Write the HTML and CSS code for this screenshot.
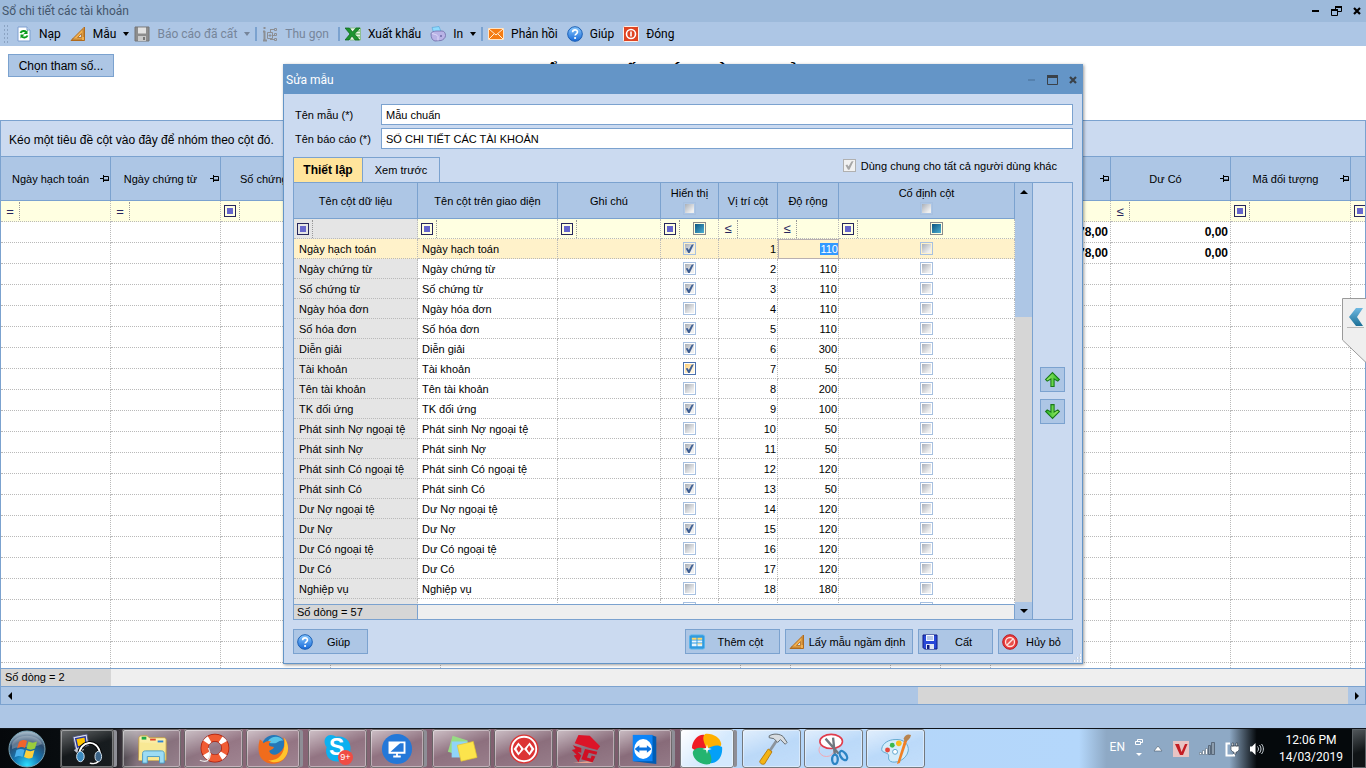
FILE: index.html
```
<!DOCTYPE html>
<html lang="vi">
<head>
    <meta charset="UTF-8">
    <meta name="viewport" content="width=device-width, initial-scale=1.0">
    <title>Sổ chi tiết các tài khoản</title>
    <link rel="stylesheet" href="styles.css">
</head>
<body>
    <svg class="sprite" aria-hidden="true">
        <defs>
            <linearGradient id="gBlue" x1="0" y1="0" x2="0" y2="1"><stop offset="0" stop-color="#8ccbff"/><stop offset="1" stop-color="#1668d8"/></linearGradient>
            <linearGradient id="gTeal" x1="0" y1="0" x2="0" y2="1"><stop offset="0" stop-color="#6fb9e2"/><stop offset="1" stop-color="#1b6f96"/></linearGradient>
            <linearGradient id="gGreen" x1="0" y1="0" x2="1" y2="0"><stop offset="0" stop-color="#a5f06a"/><stop offset="1" stop-color="#28b828"/></linearGradient>
            <radialGradient id="gOrb" cx="50%" cy="95%" r="90%"><stop offset="0" stop-color="#2fe0ff"/><stop offset="0.4" stop-color="#1678b4"/><stop offset="0.75" stop-color="#2a4a6c"/><stop offset="1" stop-color="#9fb4c4"/></radialGradient>
            <linearGradient id="gFold" x1="0" y1="0" x2="0" y2="1"><stop offset="0" stop-color="#fff6b8"/><stop offset="1" stop-color="#ecd068"/></linearGradient>
        </defs>
        <symbol id="i-reload" viewBox="0 0 16 16"><path d="M2 1h9l3 3v11H2z" fill="#fff" stroke="#7f9fd0"/><path d="M11 1v3h3" fill="#cfe0f6" stroke="#7f9fd0"/><path d="M4.500 7C5.500 4.500 9 4.500 10 6M11.500 9.500C10.500 12 7 12 6 10.500" fill="none" stroke="#0a9c1c" stroke-width="2"/><path d="M11.500 4v4h-4zM4.500 12.500v-4h4z" fill="#0a9c1c"/></symbol>
        <symbol id="i-ruler" viewBox="0 0 16 16"><path d="M1 14.500L14.500 1v13.500z" fill="#f2b04e" stroke="#b06a1c"/><path d="M7.500 11.500L11.500 7.500v4z" fill="#cfe0f2" stroke="#b06a1c" stroke-width=".8"/><path d="M3 14v-1.500M5 14v-1.500M7 14v-1.500M9 14v-1.500M11 14v-1.500M14 4h-1.500M14 6h-1.500M14 8h-1.500M14 10h-1.500" stroke="#8a4e10" stroke-width=".8"/></symbol>
        <symbol id="i-disk-off" viewBox="0 0 16 16"><path d="M1 1h14v14H1z" fill="#8d8d8d" stroke="#777"/><path d="M4 1.500h8v6H4z" fill="#e2e2e2"/><path d="M4 10h8v5H4z" fill="#c9c9c9"/><path d="M9 11h2v3H9z" fill="#777"/></symbol>
        <symbol id="i-tree" viewBox="0 0 16 16"><g fill="none" stroke="#8c8f94"><path d="M2.500 5v9M1 5.500h2M1 14.500h4" stroke-width="2"/><path d="M5.500 6.500h5v6h-5zM6.500 9.500h3M8 8v3M11 9.500h2"/><path d="M12.500 2.500h2v2h-2zM12.500 7.500h2v2h-2zM12.500 12.500h2v2h-2zM9 3.500h3M9 13.500h3M8.500 3v3M8.500 13v1"/></g><path d="M1.500 1h2v2h-2z" fill="#8c8f94"/></symbol>
        <symbol id="i-excel" viewBox="0 0 16 16"><path d="M5 2h10.500v12H5z" fill="#e8f6e4" stroke="#7cb87a" stroke-width=".8"/><path d="M9 5h6M9 8h6M9 11h6" stroke="#4aa848"/><path d="M0 2h4.500L7.500 6l3.500-4h4L9.500 8l5 6H10l-3-4-3 4H0l5-6z" fill="#1c9430" stroke="#0c6218" stroke-width=".7"/></symbol>
        <symbol id="i-print" viewBox="0 0 16 16"><path d="M2 1.500l7-1 2 5-7 2z" fill="#8edcff" stroke="#5aa8d8" stroke-width=".7"/><path d="M1 8c0-2 3-3 6-3h5c2 0 3.500 2 3.500 4.500S13 14 11 14.500L5 15c-2.500-.5-4-3-4-7z" fill="#b9b3e6" stroke="#6f6aa6" stroke-width=".8"/><path d="M2 7.500c3 1 5 1 6 3v4" stroke="#dedaf8" fill="none"/><circle cx="11" cy="10" r="1" fill="#6f6aa6"/></symbol>
        <symbol id="i-mail" viewBox="0 0 16 16"><path d="M.5 2.500h15v11H.5z" fill="#f57c14" stroke="#ffe4c4"/><path d="M1 3l7 6 7-6M1 13l5-5M15 13l-5-5" stroke="#fff0dc" fill="none"/></symbol>
        <symbol id="i-help" viewBox="0 0 16 16"><circle cx="8" cy="8" r="7.300" fill="url(#gBlue)" stroke="#1b5fb4"/><path d="M5.600 6.200C5.600 3 10.500 3.200 10.500 6c0 1.700-2.400 1.900-2.400 3.600" stroke="#fff" stroke-width="1.600" fill="none"/><circle cx="8.100" cy="12" r="1.100" fill="#fff"/></symbol>
        <symbol id="i-power" viewBox="0 0 16 16"><rect x=".5" y=".5" width="15" height="15" rx="1" fill="#df4422" stroke="#fff0e6"/><circle cx="8" cy="8" r="4.500" fill="none" stroke="#fff" stroke-width="1.600"/><path d="M8 5.500v5" stroke="#fff" stroke-width="1.600"/></symbol>
        <symbol id="i-table" viewBox="0 0 17 16"><rect x=".5" y=".5" width="16" height="15" rx="2" fill="#2f9ae0" stroke="#5ab4ec"/><path d="M3 3.500h5v2H3zM9 3.500h5v2H9z" fill="#ffd76a"/><path d="M3 6.500h5v2H3zM3 9.500h5v3H3zM9 6.500h5v2H9zM9 9.500h5v3H9z" fill="#e8f6ff"/><path d="M9 9.500h5v1H9z" fill="#ffd76a"/></symbol>
        <symbol id="i-disk" viewBox="0 0 16 16"><path d="M1 1h14v14H2.500L1 13.500z" fill="#2848d8" stroke="#101c80"/><path d="M4 1h8v6H4z" fill="#f4f8ff"/><path d="M5 3h6M5 5h6" stroke="#7e9ad0"/><path d="M4 10h8v5H4z" fill="#dfe6f4"/><path d="M5 11h2.500v4H5z" fill="#101c80"/></symbol>
        <symbol id="i-cancel" viewBox="0 0 16 16"><circle cx="8" cy="8" r="7.300" fill="#ea3b3b" stroke="#b81c24"/><circle cx="8" cy="8" r="4.500" fill="#e8504c" stroke="#ffe4e0" stroke-width="1.300"/><path d="M5 11l6-6" stroke="#ffe4e0" stroke-width="1.500"/></symbol>
        <symbol id="i-up" viewBox="0 0 16 16"><path d="M8 1.500l6.500 6.500-1.500 1.500-3.500-2V14.500h-3V7.500l-3.500 2L1.500 8z" fill="url(#gGreen)" stroke="#187a18"/></symbol>
        <symbol id="i-pin" viewBox="0 0 9 7"><path d="M0 3.500h3M3.500 0v7M4 1.500h4.500v3.500H4" fill="none" stroke="#000"/><path d="M4 5.500h5" stroke="#000"/></symbol>
        <symbol id="i-min" viewBox="0 0 10 10"><path d="M2 5h7" stroke="currentColor" stroke-width="2"/></symbol>
        <symbol id="i-max" viewBox="0 0 11 10"><path d="M.5 1v8.500h10V1" fill="none" stroke="currentColor"/><path d="M0 1.500h11" stroke="currentColor" stroke-width="3"/></symbol>
        <symbol id="i-restore" viewBox="0 0 11 10"><path d="M4.500 3V.5h6v5H7M.5 4h6v5.500h-6z" fill="none" stroke="currentColor"/><path d="M4 1h7M0 4h7" stroke="currentColor" stroke-width="2"/></symbol>
        <symbol id="i-close" viewBox="0 0 8 8"><path d="M1 1l6 6M7 1L1 7" stroke="currentColor" stroke-width="2.200"/></symbol>

        <symbol id="t-start" viewBox="0 0 38 38"><circle cx="19" cy="19" r="18" fill="url(#gOrb)" stroke="#7aa6b8"/><path d="M4 14C8 3 30 3 34 14c-9 5-21 1-30 5z" fill="#fff" opacity=".25"/><path d="M11 12c3-2.500 6-2.500 8-1l-2 7c-3-1.500-5-1-8 .5z" fill="#f0642c"/><path d="M20.500 11.500c3 1.500 5.500 1.500 8.500 0l-2 7c-3 1.500-5.500 1.500-8.500 0z" fill="#9acc3c"/><path d="M8.500 20c3-1.500 5.500-1.500 8 0l-2 7c-3-1.500-5-1-8 .5z" fill="#4ab0ec"/><path d="M18 20c3 1.500 5.500 1.500 8.500 0l-2 7.500c-3 1.500-5.500 1-8.500-.5z" fill="#ffd03c"/></symbol>
        <symbol id="t-headset" viewBox="0 0 34 34"><path d="M2 4l15-3 2 12-14 5z" fill="#d8dcec" stroke="#4a5078"/><path d="M5 6l10-2 1 8-9 3z" fill="#ffc400" stroke="#2634a0" stroke-width="1.500"/><path d="M3 18l8-3 3 3-8 3z" fill="#c4c8d4"/><path d="M9 23C8 9 29 4 31 23" fill="none" stroke="#000" stroke-width="4"/><path d="M9 23C8 9 29 4 31 23" fill="none" stroke="#fff" stroke-width="2"/><ellipse cx="10" cy="25" rx="4" ry="5.500" fill="#3c8ac0" stroke="#dceaf4"/><ellipse cx="29" cy="25" rx="3.500" ry="5.500" fill="#3c6488" stroke="#dceaf4"/><path d="M29 30c-2 3-5 3-9 2" stroke="#f4f4f4" fill="none" stroke-width="1.500"/></symbol>
        <symbol id="t-folder" viewBox="0 0 34 34"><path d="M3 6c0-2 1-3 3-3h6l2 2h16c1 0 2 1 2 2v22H3z" fill="url(#gFold)" stroke="#c4a044"/><path d="M6 4h5v3H6z" fill="#20a848"/><path d="M15 6h6v2h-6z" fill="#e0482c"/><path d="M23 8h6v2h-6z" fill="#2c84d4"/><path d="M4 10l27 2v17H3z" fill="#f8e894"/><path d="M7 32V22c0-2 1-3 3-3h17c2 0 3 1 3 3v10h-5v-7H12v7z" fill="#9cdcf4" stroke="#4a9cc4"/></symbol>
        <symbol id="t-ring" viewBox="0 0 34 34"><circle cx="18" cy="16" r="11" fill="none" stroke="#a81c0c" stroke-width="8.500"/><circle cx="18" cy="16" r="11" fill="none" stroke="#f05c34" stroke-width="7"/><circle cx="18" cy="16" r="11" fill="none" stroke="#fff" stroke-width="7.500" stroke-dasharray="5 12.280" stroke-dashoffset="-6"/><path d="M2 29c10 4 13-4 9-13" fill="none" stroke="#e8e4e4" stroke-width="1.300"/></symbol>
        <symbol id="t-firefox" viewBox="0 0 34 34"><circle cx="18" cy="15" r="13" fill="#2478b8"/><path d="M12 8c4-6 13-5 16 0-5-1-6 3-10 3s-5 0-6-3z" fill="#58c4e8"/><path d="M3 7c2 1 3 2 4 4 3-3 6-3 8-2-3 2-3 4-1 5l4 1c-1 3-4 3-5 4 1 4 6 5 9 3 8-4 8-13 5-18 7 6 8 15 3 22-6 9-20 9-26 0C1 21 1 13 3 7z" fill="#f06c1c"/><path d="M29 5c6 8 5 17-1 23-5 4-12 4-16 1 10 1 19-6 17-24z" fill="#ffc42c"/></symbol>
        <symbol id="t-skype" viewBox="0 0 34 34"><path d="M9 2c3 0 5 1 6 2 10-2 17 6 15 15 3 7-4 14-11 11C9 32 2 24 5 15 0 9 4 2 9 2z" fill="#0cb0f0"/></symbol>
        <symbol id="t-monitor" viewBox="0 0 34 34"><circle cx="17" cy="17" r="16" fill="#2478d8"/><path d="M9 10h16v11H9z" fill="none" stroke="#fff" stroke-width="2"/><path d="M9 21L21 10H9zM13 24h8v2h-8z" fill="#fff"/><path d="M16 21h2v4h-2z" fill="#fff"/></symbol>
        <symbol id="t-notes" viewBox="0 0 34 34"><path d="M7 3l16 5-4 17L2 20z" fill="#98dc84"/><path d="M6 9h17v17H6z" fill="#90d4f8"/><path d="M12 13l17-4 4 17-17 4z" fill="#fce44c" stroke="#e4c430" stroke-width=".7"/></symbol>
        <symbol id="t-misa" viewBox="0 0 34 34"><circle cx="17" cy="17" r="15.500" fill="#dc3434"/><circle cx="17" cy="17" r="13" fill="none" stroke="#fff" stroke-width="2"/><path d="M6 17l5-7 6 7 6-7 5 7-5 7-6-7-6 7z" fill="#fff"/><path d="M9 17l2.500-4 2.500 4-2.500 4zM20 17l2.500-4 2.500 4-2.500 4z" fill="#dc3434"/></symbol>
        <symbol id="t-red3g" viewBox="0 0 34 34"><path d="M9 2l12 1 11 11-3 4-8-2-16-5z" fill="#dc1428"/><path d="M3 13l9 3v5l-4-1 4 4-3 7-5-7 3-1-5-5 4-1zM16 17l13 3-1 3-8-2-2 5 4 1 1-3 4 1-3 6-12-3z" fill="#d01024"/><path d="M3 32h22l-7-2z" fill="#e8a08c"/></symbol>
        <symbol id="t-viewer" viewBox="0 0 34 34"><path d="M5 2h19l5 2v29l-24-3z" fill="#005cb4"/><path d="M4 2h21v28H4z" fill="#0c84f8"/><ellipse cx="15" cy="17" rx="9.500" ry="10.500" fill="#fff"/><path d="M6 17l5-4v2.500h8V13l5 4-5 4v-2.500h-8V21z" fill="#0c74e0"/></symbol>
        <symbol id="t-pinwheel" viewBox="0 0 34 34"><path d="M17 17C11 20 3 19 1 16 1 8 8 1 14 2c5 1 7 7 3 15z" fill="#f01c24"/><path d="M17 17C14 11 11 4 15 1c8-1 16 4 17 10 1 5-6 8-15 6z" fill="#ffb000"/><path d="M17 17c6-4 12-5 16-2 1 9-4 16-10 17-5 1-9-6-6-15z" fill="#04a0f8"/><path d="M17 17c5 5 6 13 3 16-8 2-17-4-18-11-1-5 7-8 15-5z" fill="#24b470"/><path d="M17 12l1 4 4 1-4 1-1 4-1-4-4-1 4-1z" fill="#fff"/></symbol>
        <symbol id="t-hammer" viewBox="0 0 34 34"><path d="M22 8L14 20" stroke="#8c949c" stroke-width="3"/><path d="M13 17l4 3-8 13c-3 1-5-1-5-3z" fill="#f4b414" stroke="#b87c0c"/><path d="M14 3c5-3 12-2 15 1l4 6-2 2-5-5-3 3-4-4-5-1z" fill="#d8dce0" stroke="#60686c"/></symbol>
        <symbol id="t-snip" viewBox="0 0 34 34"><ellipse cx="9" cy="18" rx="8" ry="7" fill="none" stroke="#f4a4b0"/><ellipse cx="14" cy="9" rx="12" ry="7.500" fill="#fff" stroke="#e03c4c" stroke-width="1.700"/><path d="M8 6l14 16M16 5l2 19" stroke="#707880" stroke-width="2.500"/><ellipse cx="27" cy="24" rx="3" ry="5.500" transform="rotate(-35 27 24)" fill="none" stroke="#2c84c4" stroke-width="2.500"/><ellipse cx="18" cy="28" rx="3" ry="5" fill="none" stroke="#2c84c4" stroke-width="2.500"/></symbol>
        <symbol id="t-paint" viewBox="0 0 34 34"><path d="M16 7c9-1 15 5 14 12-2 10-14 14-19 11-4-3 0-6-3-8-4-2-7-2-6-6 1-5 7-9 14-9z" fill="#d4ecfa" stroke="#5ca4cc"/><circle cx="8" cy="18" r="2.600" fill="#e4483c"/><circle cx="13" cy="13" r="2.600" fill="#3cb84c"/><circle cx="20" cy="11" r="3" fill="#fcbc1c"/><circle cx="16" cy="20" r="2.600" fill="#fff" stroke="#5ca4cc"/><path d="M29 8l-8 24-3 1 8-26z" fill="#f08024"/><path d="M25 6c2-5 5-5 8-4-1 4-3 6-6 7z" fill="#b88450"/></symbol>
    </svg>

    <main class="desktop">
        <header class="titlebar">
            <span class="titlebar-text">Sổ chi tiết các tài khoản</span>
            <div class="window-buttons">
                <button aria-label="Thu nhỏ"><svg width="10" height="10"><use href="#i-min"/></svg></button>
                <button aria-label="Khôi phục"><svg width="11" height="10"><use href="#i-restore"/></svg></button>
                <button aria-label="Đóng cửa sổ"><svg width="8" height="8"><use href="#i-close"/></svg></button>
            </div>
        </header>

        <nav class="toolbar">
            <span class="grip"></span>
            <button class="tool"><svg class="icon"><use href="#i-reload"/></svg>Nạp</button>
            <button class="tool"><svg class="icon"><use href="#i-ruler"/></svg>Mẫu<i class="caret"></i></button>
            <button class="tool" disabled><svg class="icon"><use href="#i-disk-off"/></svg>Báo cáo đã cất<i class="caret"></i></button>
            <span class="sep"></span>
            <button class="tool" disabled><svg class="icon"><use href="#i-tree"/></svg>Thu gọn</button>
            <span class="sep"></span>
            <button class="tool"><svg class="icon"><use href="#i-excel"/></svg>Xuất khẩu</button>
            <button class="tool"><svg class="icon"><use href="#i-print"/></svg>In<i class="caret"></i></button>
            <span class="sep"></span>
            <button class="tool"><svg class="icon"><use href="#i-mail"/></svg>Phản hồi</button>
            <button class="tool"><svg class="icon"><use href="#i-help"/></svg>Giúp</button>
            <button class="tool"><svg class="icon"><use href="#i-power"/></svg>Đóng</button>
        </nav>

        <section class="report-head">
            <button class="btn btn-params">Chọn tham số...</button>
            <h1>SỔ CHI TIẾT CÁC TÀI KHOẢN</h1>
        </section>

        <section class="report">
            <p class="group-panel">Kéo một tiêu đề cột vào đây để nhóm theo cột đó.</p>
            <div class="report-scroll">
                <table class="grid report-grid" id="reportGrid">
                    <colgroup></colgroup>
                    <thead></thead>
                    <tbody></tbody>
                </table>
            </div>
            <div class="report-foot"><span>Số dòng = 2</span></div>
            <div class="hscroll">
                <button aria-label="Cuộn trái"><i class="tri tri-left"></i></button>
                <span class="hscroll-thumb"></span>
                <span class="hscroll-track"></span>
                <button aria-label="Cuộn phải"><i class="tri tri-right"></i></button>
            </div>
        </section>
        <div class="status"></div>

        <button class="side-tab" aria-label="Mở rộng">
            <svg width="24" height="65" viewBox="0 0 24 65"><path d="M24 .5H.5V42L24 64.500" fill="#efefef" stroke="#9a9a9a"/><path d="M14 10h7l-6 9 6 9h-7L7 19z" fill="url(#gTeal)"/><path d="M5 29.500h17" stroke="#b8b8b8"/></svg>
        </button>

        <div class="overlay">
            <form class="dialog" role="dialog" aria-label="Sửa mẫu">
                <header class="dialog-title">
                    <span>Sửa mẫu</span>
                    <div class="window-buttons">
                        <button type="button" class="dim" aria-label="Thu nhỏ"><svg width="10" height="10"><use href="#i-min"/></svg></button>
                        <button type="button" aria-label="Phóng to"><svg width="11" height="10"><use href="#i-max"/></svg></button>
                        <button type="button" aria-label="Đóng hộp thoại"><svg width="8" height="8"><use href="#i-close"/></svg></button>
                    </div>
                </header>
                <div class="dialog-body">
                    <div class="field">
                        <label for="tenMau">Tên mẫu (*)</label>
                        <input type="text" id="tenMau" value="Mẫu chuẩn">
                    </div>
                    <div class="field">
                        <label for="tenBaoCao">Tên báo cáo (*)</label>
                        <input type="text" id="tenBaoCao" value="SỔ CHI TIẾT CÁC TÀI KHOẢN">
                    </div>
                    <div class="tabs">
                        <button type="button" class="tab active">Thiết lập</button>
                        <button type="button" class="tab">Xem trước</button>
                        <label class="shared"><input type="checkbox" class="check" checked disabled>Dùng chung cho tất cả người dùng khác</label>
                    </div>
                    <div class="panel">
                        <div class="panel-grid">
                            <div class="setup-scroll">
                                <table class="grid setup-grid" id="setupGrid">
                                    <colgroup><col class="w-name"><col class="w-label"><col class="w-note"><col class="w-show"><col class="w-pos"><col class="w-width"><col></colgroup>
                                    <thead>
                                        <tr>
                                            <th>Tên cột dữ liệu</th>
                                            <th>Tên cột trên giao diện</th>
                                            <th>Ghi chú</th>
                                            <th><label class="head-check">Hiển thị<input type="checkbox" class="check"></label></th>
                                            <th>Vị trí cột</th>
                                            <th>Độ rộng</th>
                                            <th><label class="head-check">Cố định cột<input type="checkbox" class="check"></label></th>
                                        </tr>
                                    </thead>
                                    <tbody></tbody>
                                </table>
                            </div>
                            <div class="setup-foot"><span>Số dòng = 57</span></div>
                        </div>
                        <div class="vscroll">
                            <button type="button" aria-label="Cuộn lên"><i class="tri tri-up"></i></button>
                            <span class="vscroll-thumb"></span>
                            <span class="vscroll-track"></span>
                            <button type="button" aria-label="Cuộn xuống"><i class="tri tri-down"></i></button>
                        </div>
                        <div class="movers">
                            <button type="button" class="btn mover" aria-label="Lên"><svg width="17" height="17"><use href="#i-up"/></svg></button>
                            <button type="button" class="btn mover down" aria-label="Xuống"><svg width="17" height="17"><use href="#i-up"/></svg></button>
                        </div>
                    </div>
                    <footer class="actions">
                        <button type="button" class="btn"><svg class="icon"><use href="#i-help"/></svg><span>Giúp</span></button>
                        <span class="spacer"></span>
                        <button type="button" class="btn wide"><svg class="icon"><use href="#i-table"/></svg><span>Thêm cột</span></button>
                        <button type="button" class="btn widest"><svg class="icon"><use href="#i-ruler"/></svg><span>Lấy mẫu ngầm định</span></button>
                        <button type="button" class="btn"><svg class="icon"><use href="#i-disk"/></svg><span>Cất</span></button>
                        <button type="button" class="btn"><svg class="icon"><use href="#i-cancel"/></svg><span>Hủy bỏ</span></button>
                    </footer>
                </div>
                <svg class="resize" width="9" height="9" viewBox="0 0 9 9"><path d="M7 1h2M4 4h2M7 4h2M1 7h2M4 7h2M7 7h2" stroke="#f4f8fd" stroke-width="2"/><path d="M7 1h1M4 4h1M7 4h1M1 7h1M4 7h1M7 7h1" stroke="#9aa9bd"/></svg>
            </form>
        </div>
    </main>

    <footer class="taskbar">
        <button class="start" aria-label="Start"><svg width="38" height="38"><use href="#t-start"/></svg></button>
        <div class="tasks" id="tasks"></div>
        <div class="tray">
            <span class="lang">EN</span>
            <svg width="8" height="20" viewBox="0 0 8 20"><path d="M2.500 2.500V.5h5v3h-2M.5 2.500h5v3h-5z" fill="none" stroke="#fff"/><path d="M1 14h6l-3 3z" fill="#fff"/></svg>
            <svg class="tray-up" width="10" height="8" viewBox="0 0 10 8"><path d="M5 1l4 5H1z" fill="#fff" stroke="#4c5c6c" stroke-width=".6"/></svg>
            <svg width="16" height="16" viewBox="0 0 16 16"><path d="M0 0h16v16H0z" fill="#e8c4c4"/><path d="M2 3h4l2.500 8L12 3h2.500L10 14H7z" fill="#c41c24"/></svg>
            <svg width="16" height="13" viewBox="0 0 16 13"><path d="M.5 10.500h2v2h-2zM3.500 8.500h2v4h-2zM6.500 6.500h2v6h-2z" fill="#fff" stroke="#4c5c6c" stroke-width=".5"/><path d="M9.500 3.500h2v9h-2zM12.500.5h3v12h-3z" fill="#8c9cac" stroke="#4c5c6c" stroke-width=".8"/></svg>
            <svg width="14" height="16" viewBox="0 0 14 16"><path d="M5 2.500H1.500v12H9V13" fill="none" stroke="#fff" stroke-width="2"/><path d="M6 5h8v4l-2 2h-1v2H9v-2H8L6 9zM7 2h1.500v3H7zM11 2h1.500v3H11z" fill="#fff" stroke="#2c3844" stroke-width=".6"/></svg>
            <svg width="15" height="14" viewBox="0 0 15 14"><path d="M1 4.500h2L6.500 1v12L3 9.500H1z" fill="#fff"/><path d="M8.500 4.500c1.300 1.500 1.300 3.500 0 5M10.500 3c2 2.500 2 5.500 0 8M12.500 2c2.500 3 2.500 7 0 10" fill="none" stroke="#cdd4da"/></svg>
            <time class="clock"><span>12:06 PM</span><span>14/03/2019</span></time>
            <button class="show-desktop" aria-label="Show desktop"></button>
        </div>
    </footer>

    <script>
        const reportCols = [
            ['Ngày hạch toán', 110, '='], ['Ngày chứng từ', 110, '='], ['Số chứng từ', 110, ''], ['Số hóa đơn', 110, ''],
            ['Diễn giải', 300, ''], ['Tài khoản', 50, ''], ['TK đối ứng', 100, ''], ['Phát sinh Nợ', 50, '≤'],
            ['Phát sinh Có', 50, '≤'], ['Dư Nợ', 120, '≤'], ['Dư Có', 120, '≤'], ['Mã đối tượng', 120, ''], ['', 120, '']
        ];

        // name, shown, width
        const setupRows = [
            ['Ngày hạch toán', 1, 110], ['Ngày chứng từ', 1, 110], ['Số chứng từ', 1, 110], ['Ngày hóa đơn', 0, 110],
            ['Số hóa đơn', 1, 110], ['Diễn giải', 1, 300], ['Tài khoản', 1, 50], ['Tên tài khoản', 0, 200],
            ['TK đối ứng', 1, 100], ['Phát sinh Nợ ngoại tệ', 0, 50], ['Phát sinh Nợ', 1, 50], ['Phát sinh Có ngoại tệ', 0, 120],
            ['Phát sinh Có', 1, 50], ['Dư Nợ ngoại tệ', 0, 120], ['Dư Nợ', 1, 120], ['Dư Có ngoại tệ', 0, 120],
            ['Dư Có', 1, 120], ['Nghiệp vụ', 0, 180]
        ];

        const tasks = [
            ['headset', 'dark stacked'], ['folder', ''], ['ring', ''], ['firefox', 'stacked'], ['skype', ''], ['monitor', 'stacked'], ['notes', ''],
            ['misa', ''], ['red3g', ''], ['viewer', 'stacked'], ['pinwheel', 'stacked active'], ['hammer', ''], ['snip', ''], ['paint', '']
        ];

        function filterOp(op) {
            return `<span class="op">${op || '<i class="op-box"></i>'}</span>`;
        }

        function check(on, label, cls = '') {
            return `<input type="checkbox" class="check ${cls}" aria-label="${label}"${on ? ' checked' : ''}>`;
        }

        // report grid behind the dialog
        const report = document.getElementById('reportGrid');
        report.querySelector('colgroup').innerHTML = reportCols.map(c => `<col style="width:${c[1]}px">`).join('');
        report.tHead.innerHTML =
            '<tr>' + reportCols.map(c => `<th><div class="th-pin"><span>${c[0]}</span><svg width="9" height="7"><use href="#i-pin"/></svg></div></th>`).join('') + '</tr>' +
            '<tr class="filter">' + reportCols.map(c => `<td>${filterOp(c[2])}</td>`).join('') + '</tr>';
        let body = '';
        for (let i = 0; i < 22; i++) {
            body += '<tr>' + reportCols.map(c => {
                if (i > 1) return '<td></td>';
                if (c[0] === 'Dư Nợ') return '<td class="num">78,00</td>';
                if (c[0] === 'Dư Có') return '<td class="num">0,00</td>';
                return '<td></td>';
            }).join('') + '</tr>';
        }
        report.tBodies[0].innerHTML = body;

        // column setup grid
        let rows = '<tr class="filter">' +
            `<td class="name">${filterOp('')}</td><td>${filterOp('')}</td><td>${filterOp('')}</td>` +
            `<td><div class="with-check">${filterOp('')}${check(0, 'Lọc hiển thị', 'mixed')}</div></td>` +
            `<td>${filterOp('≤')}</td><td>${filterOp('≤')}</td>` +
            `<td><div class="with-check">${filterOp('')}${check(0, 'Lọc cố định', 'mixed')}</div></td></tr>`;
        setupRows.forEach((r, i) => {
            const width = i === 0 ? `<input type="text" class="cell-edit" id="editing" aria-label="Độ rộng" value="${r[2]}">` : r[2];
            rows += `<tr${i === 0 ? ' class="current"' : ''}><td class="name">${r[0]}</td><td>${r[0]}</td><td></td>` +
                `<td class="mid">${check(r[1], 'Hiển thị ' + r[0], i === 6 ? 'hot' : '')}</td>` +
                `<td class="num">${i + 1}</td><td class="num${i === 0 ? ' editing' : ''}">${width}</td>` +
                `<td class="mid">${check(0, 'Cố định ' + r[0])}</td></tr>`;
        });
        rows += `<tr><td class="name"></td><td></td><td></td><td class="mid">${check(0, 'Hiển thị')}</td><td></td><td></td><td class="mid">${check(0, 'Cố định')}</td></tr>`;
        document.querySelector('#setupGrid tbody').innerHTML = rows;

        document.getElementById('tasks').innerHTML = tasks.map(t => {
            const extra = t[0] === 'skype' ? '<b class="skype-s">S</b><span class="badge">9+</span>' : '';
            return `<button class="task ${t[1]}" aria-label="${t[0]}"><svg width="34" height="34"><use href="#t-${t[0]}"/></svg>${extra}</button>`;
        }).join('');

        const editing = document.getElementById('editing');
        editing.focus();
        editing.select();
    </script>
</body>
</html>
```
FILE: styles.css
```
:root {
    --blue: #adc6e5;
    --panel: #cbdaf0;
    --line: #7ba2cf;
    --frame: #6495c7;
    --dots: #b9b9b9;
    --filter: #ffffe1;
    --gray: #efefef;
    --ui: Roboto, "Open Sans", sans-serif;
}

* { box-sizing: border-box; }

body {
    margin: 0;
    height: 100vh;
    display: flex;
    flex-direction: column;
    overflow: hidden;
    font-family: "Liberation Sans", Arial, sans-serif;
    font-size: 11px;
    color: #000;
}

button, input {
    font: inherit;
    color: inherit;
}

button {
    margin: 0;
    padding: 0;
    border: 0;
    background: none;
}

svg { flex: none; }
.sprite { position: absolute; width: 0; height: 0; }
.icon { width: 16px; height: 16px; }

.desktop {
    position: relative;
    flex: 1;
    min-height: 0;
    display: flex;
    flex-direction: column;
    background: #fff;
}

/* main window */
.titlebar {
    height: 22px;
    padding: 0 5px 0 2px;
    display: flex;
    align-items: center;
    justify-content: space-between;
    background: #9dbadb;
}

.titlebar-text {
    font-family: var(--ui);
    font-size: 12px;
    color: #44566b;
}

.window-buttons {
    display: flex;
    align-items: center;
    gap: 11px;
}

.window-buttons button { display: flex; }

.toolbar {
    height: 24px;
    padding-left: 3px;
    display: flex;
    align-items: center;
    background: var(--blue);
    font-family: var(--ui);
    font-size: 12px;
}

.grip {
    width: 5px;
    height: 20px;
    margin-right: 8px;
    background: radial-gradient(circle, #8ba3c2 1px, transparent 1px) 0 0 / 3px 4px;
}

.tool {
    display: flex;
    align-items: center;
    gap: 7px;
    margin-right: 9px;
    white-space: nowrap;
}

.tool:has(.caret) { margin-right: 5px; }
.tool:disabled { color: #76859a; }

.caret {
    border: 3px solid transparent;
    border-top: 4px solid currentColor;
    border-bottom: 0;
}

.sep {
    width: 2px;
    height: 14px;
    margin-right: 5px;
    background: var(--line);
}

.btn {
    border: 1px solid var(--line);
    background: var(--blue);
}

.report-head {
    position: relative;
    height: 74px;
    padding: 8px;
}

.btn-params {
    width: 106px;
    height: 23px;
    font-size: 12px;
}

.report-head h1 {
    position: absolute;
    top: 15px;
    left: 0;
    right: 20px;
    margin: 0;
    text-align: center;
    font-size: 20px;
    line-height: 24px;
}

.report {
    flex: 1;
    min-height: 0;
    display: flex;
    flex-direction: column;
    border: 1px solid var(--line);
}

.group-panel {
    margin: 0;
    padding: 3px 8px 0;
    font-size: 12px;
    line-height: 32px;
    background: var(--panel);
    border-bottom: 1px solid var(--line);
}

.report-scroll {
    flex: 1;
    min-height: 0;
    overflow: hidden;
}

.grid {
    table-layout: fixed;
    border-collapse: separate;
    border-spacing: 0;
}

.grid th {
    padding: 0;
    font-weight: normal;
    background: var(--blue);
    border-right: 1px solid var(--line);
    border-bottom: 1px solid var(--line);
}

.grid td {
    padding: 0 4px;
    border-right: 1px dotted var(--dots);
    border-bottom: 1px dotted var(--dots);
    white-space: nowrap;
    overflow: hidden;
}

.grid .filter td {
    padding: 0;
    background: var(--filter);
}

.grid .num {
    padding: 0 1px;
    text-align: right;
}

.report-grid { width: 1470px; }
.report-grid th { height: 44px; }
.report-grid td { height: 21px; }
.report-grid .num { padding-right: 2px; font-weight: bold; font-size: 12px; }

.th-pin {
    display: flex;
    align-items: center;
    padding-right: 1px;
}

.th-pin span { flex: 1; }

.op {
    display: flex;
    align-items: center;
    justify-content: center;
    width: 19px;
    height: 18px;
    border-right: 1px dotted #999;
    font-size: 13px;
    color: #26265c;
}

.op-box {
    width: 12px;
    height: 12px;
    padding: 2px;
    border: 1px solid #26265c;
    background: #6666cc content-box;
}

.report-foot {
    height: 18px;
    background: var(--gray);
    border-top: 1px solid var(--line);
}

.report-foot span {
    display: block;
    width: 110px;
    padding-left: 4px;
    line-height: 17px;
    background: #d6d6d6;
}

.hscroll {
    display: flex;
    height: 18px;
    border-top: 1px solid var(--line);
    background: var(--blue);
}

.hscroll button {
    width: 17px;
    display: flex;
    align-items: center;
    justify-content: center;
}

.hscroll-thumb { flex: 900; }
.hscroll-track { flex: 430; background: #d6d6d6; }

.tri { border: 4px solid transparent; }
.tri-left { border-right-color: #000; border-left: 0; }
.tri-right { border-left-color: #000; border-right: 0; }
.tri-up { border-bottom-color: #000; border-top: 0; }
.tri-down { border-top-color: #000; border-bottom: 0; }

.status {
    height: 23px;
    background: var(--blue);
}

.side-tab {
    position: absolute;
    right: 0;
    top: 298px;
    display: flex;
}

/* dialog */
.overlay {
    position: absolute;
    inset: 0;
    display: flex;
    align-items: center;
    justify-content: center;
}

.dialog {
    position: relative;
    width: 800px;
    max-width: 100%;
    height: 600px;
    max-height: 100%;
    display: flex;
    flex-direction: column;
    border: 1px solid var(--frame);
    background: var(--panel);
    box-shadow: 1px 1px 3px rgba(0, 0, 0, 0.4);
}

.dialog-title {
    height: 29px;
    padding: 0 5px 0 2px;
    display: flex;
    align-items: center;
    justify-content: space-between;
    background: var(--frame);
    color: #fff;
    font-family: var(--ui);
    font-size: 12px;
}

.dialog-title .window-buttons { color: #3a4149; }
.dialog-title .dim { color: #5581ae; }

.dialog-body {
    flex: 1;
    min-height: 0;
    padding: 10px 9px 9px;
    display: flex;
    flex-direction: column;
}

.field {
    display: flex;
    align-items: center;
    margin-bottom: 3px;
}

.field label {
    width: 88px;
    padding-left: 2px;
}

.field input {
    flex: 1;
    height: 21px;
    padding: 0 4px;
    border: 1px solid var(--line);
    background: #fff;
    outline: 0;
}

.tabs {
    display: flex;
    align-items: stretch;
    height: 25px;
    margin-top: 5px;
}

.tab {
    width: 77px;
    border: 1px solid var(--line);
    border-left: 0;
    border-bottom: 0;
}

.tab.active {
    width: 70px;
    border-left: 1px solid var(--line);
    background: #ffe49c;
    font-size: 12px;
    font-weight: bold;
}

.shared {
    display: flex;
    align-items: center;
    gap: 5px;
    margin-left: auto;
    margin-right: 16px;
    margin-bottom: 8px;
}

.panel {
    flex: 1;
    min-height: 0;
    display: flex;
    border: 1px solid var(--line);
}

.panel-grid {
    flex: 1;
    min-width: 0;
    display: flex;
    flex-direction: column;
}

.setup-scroll {
    flex: 1;
    min-height: 0;
    overflow: hidden;
    background: #fff;
}

.setup-grid { width: 100%; }
.setup-grid th { height: 36px; }
.setup-grid td { height: 20px; background: #fff; }
.setup-grid .name { padding-left: 5px; background: #e5e5e5; }
.setup-grid .filter .name { padding-left: 0; background: #e5e5e5; }
.setup-grid .current td { background: #fff2ca; }
.setup-grid .mid { padding: 0; text-align: center; }
.setup-grid .mid .check { vertical-align: middle; }
.w-name { width: 124px; }
.w-label { width: 140px; }
.w-note { width: 103px; }
.w-show { width: 58px; }
.w-pos { width: 59px; }
.w-width { width: 61px; }

.head-check {
    display: flex;
    flex-direction: column;
    align-items: center;
    gap: 3px;
}

.with-check {
    display: flex;
    align-items: center;
}

.with-check .check { margin: auto; }

.check {
    appearance: none;
    position: relative;
    flex: none;
    width: 13px;
    height: 13px;
    margin: 0;
    padding: 1px;
    border: 1px solid #a7c0e0;
    background: linear-gradient(135deg, #a9afb8, #f0f0f0 80%) content-box #fff;
}

.check:checked::after {
    content: "";
    position: absolute;
    inset: 1px;
    background: #3f5f94;
    clip-path: polygon(8% 48%, 28% 40%, 42% 62%, 74% 5%, 98% 0, 52% 98%, 36% 98%);
}

.check.mixed {
    border-color: #8a8a8a;
    background: linear-gradient(135deg, #0c5480, #4cb0d4) content-box #fff;
}

.check.hot {
    border-color: #4a70ac;
    background: linear-gradient(135deg, #fccc70, #fff4dc 75%) content-box #fff;
}

.check:disabled {
    border-color: #b0b0b0;
    background: #f1f1f1;
}

.check:disabled::after { background: #a6a6a6; }

.setup-grid .editing {
    padding: 0;
    border: 1px solid #b9b0b0;
}

.cell-edit {
    display: block;
    width: 100%;
    height: 13px;
    padding: 0;
    border: 0;
    outline: 0;
    background: none;
    text-align: right;
}

.cell-edit::selection {
    background: #3399ff;
    color: #fff;
}

.setup-foot {
    height: 15px;
    background: var(--gray);
    border-top: 1px solid var(--line);
    border-right: 1px solid var(--line);
}

.setup-foot span {
    display: block;
    width: 124px;
    padding-left: 3px;
    line-height: 14px;
    background: #d6d6d6;
    border-right: 1px solid var(--line);
}

.vscroll {
    width: 18px;
    display: flex;
    flex-direction: column;
    background: var(--blue);
    border-right: 1px solid var(--line);
}

.vscroll button {
    height: 17px;
    display: flex;
    align-items: center;
    justify-content: center;
}

.vscroll-thumb { flex: 118; }
.vscroll-track { flex: 286; background: #d6d6d6; }

.movers {
    width: 39px;
    display: flex;
    flex-direction: column;
    align-items: center;
    justify-content: center;
    gap: 7px;
    padding-bottom: 12px;
}

.mover {
    width: 25px;
    height: 25px;
    display: flex;
    align-items: center;
    justify-content: center;
}

.mover.down svg { transform: rotate(180deg); }

.actions {
    display: flex;
    gap: 5px;
    margin-top: 9px;
}

.actions .btn {
    width: 75px;
    height: 25px;
    padding: 0 3px;
    display: flex;
    align-items: center;
}

.actions .btn span { flex: 1; }
.actions .wide { width: 95px; }
.actions .widest { width: 128px; }
.spacer { flex: 1; }

.resize {
    position: absolute;
    right: 1px;
    bottom: 0;
}

/* taskbar */
.taskbar {
    height: 40px;
    display: flex;
    align-items: center;
    border-top: 1px solid #10141a;
    background: linear-gradient(90deg, #05080b 0, #0b1013 8%, #6f5c68 10%, #8a6878 16%, #7a5a6a 50%, #b4d5f8 53%, #b4d7fb 79%, #8ea9c5 81%, #8ea9c5 90%, #05090c 92%);
}

.start {
    display: flex;
    flex: none;
    width: 60px;
    padding-left: 8px;
}

.tasks {
    display: flex;
    gap: 3px;
}

.task {
    position: relative;
    width: 59px;
    height: 39px;
    display: flex;
    align-items: center;
    justify-content: center;
    border: 1px solid rgba(255, 255, 255, 0.6);
    border-radius: 3px;
    outline: 1px solid rgba(0, 0, 0, 0.5);
    outline-offset: -1px;
    box-shadow: inset 0 0 0 1px rgba(255, 255, 255, 0.4);
    background: linear-gradient(160deg, rgba(255, 255, 255, 0.6), rgba(255, 255, 255, 0.1) 50%, rgba(255, 255, 255, 0.2));
}

.task svg {
    width: 32px;
    height: 32px;
}

.task.dark { background: linear-gradient(160deg, rgba(255, 255, 255, 0.4), rgba(255, 255, 255, 0.05) 50%); }
.task.active { background: linear-gradient(135deg, #fff, #d4e9fd 60%); }

.task.stacked {
    width: 54px;
    margin-right: 5px;
    box-shadow: inset 0 0 0 1px rgba(255, 255, 255, 0.4), 4px 0 0 -1px #8e8e96;
}

.skype-s {
    position: absolute;
    left: 20px;
    top: 4px;
    font-size: 23px;
    line-height: 26px;
    color: #fff;
}

.badge {
    position: absolute;
    right: 13px;
    bottom: 2px;
    width: 15px;
    border-radius: 8px;
    background: #f04c44;
    color: #fff;
    font-size: 9px;
    line-height: 15px;
}

.tray {
    flex: 1;
    display: flex;
    align-items: center;
    justify-content: flex-end;
    gap: 10px;
    color: #fff;
    font-family: var(--ui);
    font-size: 12px;
}

.lang { padding-bottom: 4px; }

.clock {
    width: 62px;
    margin-left: 6px;
    display: flex;
    flex-direction: column;
    align-items: center;
    line-height: 17px;
}

.show-desktop {
    width: 14px;
    height: 39px;
    border: 1px solid #5c6266;
    background: linear-gradient(160deg, #50565a, #101416 60%);
}
```
